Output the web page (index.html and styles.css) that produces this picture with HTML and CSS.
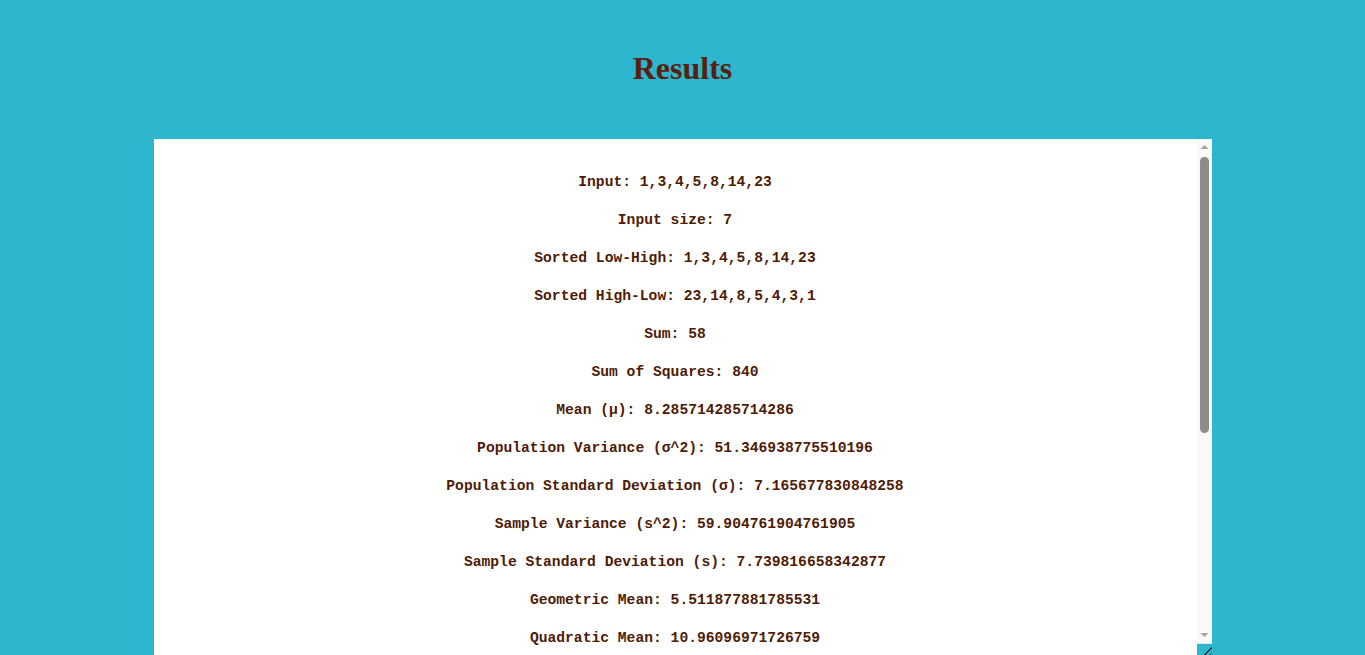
FILE: index.html
```html
<!DOCTYPE html>
<html lang="en">
<head>
<meta charset="utf-8">
<title>Results</title>
<link rel="stylesheet" href="styles.css">
</head>
<body>
<main class="page">
<h1 class="title">Results</h1>
<div class="box">
<textarea class="results" readonly>Input: 1,3,4,5,8,14,23

Input size: 7

Sorted Low-High: 1,3,4,5,8,14,23

Sorted High-Low: 23,14,8,5,4,3,1

Sum: 58

Sum of Squares: 840

Mean (μ): 8.285714285714286

Population Variance (σ^2): 51.346938775510196

Population Standard Deviation (σ): 7.165677830848258

Sample Variance (s^2): 59.904761904761905

Sample Standard Deviation (s): 7.739816658342877

Geometric Mean: 5.511877881785531

Quadratic Mean: 10.96096971726759

Harmonic Mean: 3.459797639418278

Median: 5

Mode: none

Minimum: 1

Maximum: 23

Range: 22

Midrange: 12

Mean Absolute Deviation: 5.469387755102041

Coefficient of Variation: 0.8648035143104847

Standard Error of the Mean: 2.925370651628578</textarea>
<div class="scrollbar" aria-hidden="true">
  <div class="sb-btn"><svg width="15" height="15" viewBox="0 0 15 15"><polygon points="3.5,10 7.5,6 11.5,10" fill="#a3a3a3"/></svg></div>
  <div class="sb-track"><div class="sb-thumb"></div></div>
  <div class="sb-btn"><svg width="15" height="15" viewBox="0 0 15 15"><polygon points="3.5,5 11.5,5 7.5,9" fill="#a3a3a3"/></svg></div>
</div>
</div>
</main>
</body>
</html>
```

FILE: styles.css
```css
html, body {
  margin: 0;
  padding: 0;
}
body {
  background: #2cb7ce;
  height: 100vh;
  overflow: hidden;
}
.page {
  display: flex;
  flex-direction: column;
  align-items: center;
  padding-top: 50px;
}
.title {
  margin: 0 0 52px;
  font-family: "Liberation Serif", "Times New Roman", serif;
  font-size: 32px;
  font-weight: bold;
  color: #5a1f10;
}
.box {
  position: relative;
  width: 1058px;
  height: 519px;
}
.results {
  display: block;
  box-sizing: border-box;
  width: 100%;
  height: 100%;
  margin: 0;
  border: none;
  outline: none;
  padding: 34px 15px 4px 0;
  background: #ffffff;
  color: #4f1b05;
  font-family: "Liberation Mono", "DejaVu Sans Mono", monospace;
  font-size: 14.67px;
  font-weight: bold;
  line-height: 19px;
  text-align: center;
  resize: none;
  overflow: hidden;
}
.scrollbar {
  position: absolute;
  top: 0;
  right: 0;
  width: 15px;
  height: 504px;
  display: flex;
  flex-direction: column;
  background: #f9f9f9;
}
.sb-btn {
  height: 15px;
  flex: none;
}
.sb-btn svg {
  display: block;
}
.sb-track {
  flex: 1;
  padding: 3px 3px 0;
}
.sb-thumb {
  height: 276px;
  background: #8c8c8c;
  border-radius: 5px;
}
.box::after {
  content: "";
  position: absolute;
  right: 0;
  bottom: 0;
  width: 15px;
  height: 15px;
  box-sizing: border-box;
  border-top: 1px solid #e6e6e6;
  background:
    linear-gradient(135deg, transparent 0 62%, #3a3a3a 62% 68%, transparent 68% 80%, #3a3a3a 80% 86%, transparent 86%),
    #2cb7ce;
}
```
